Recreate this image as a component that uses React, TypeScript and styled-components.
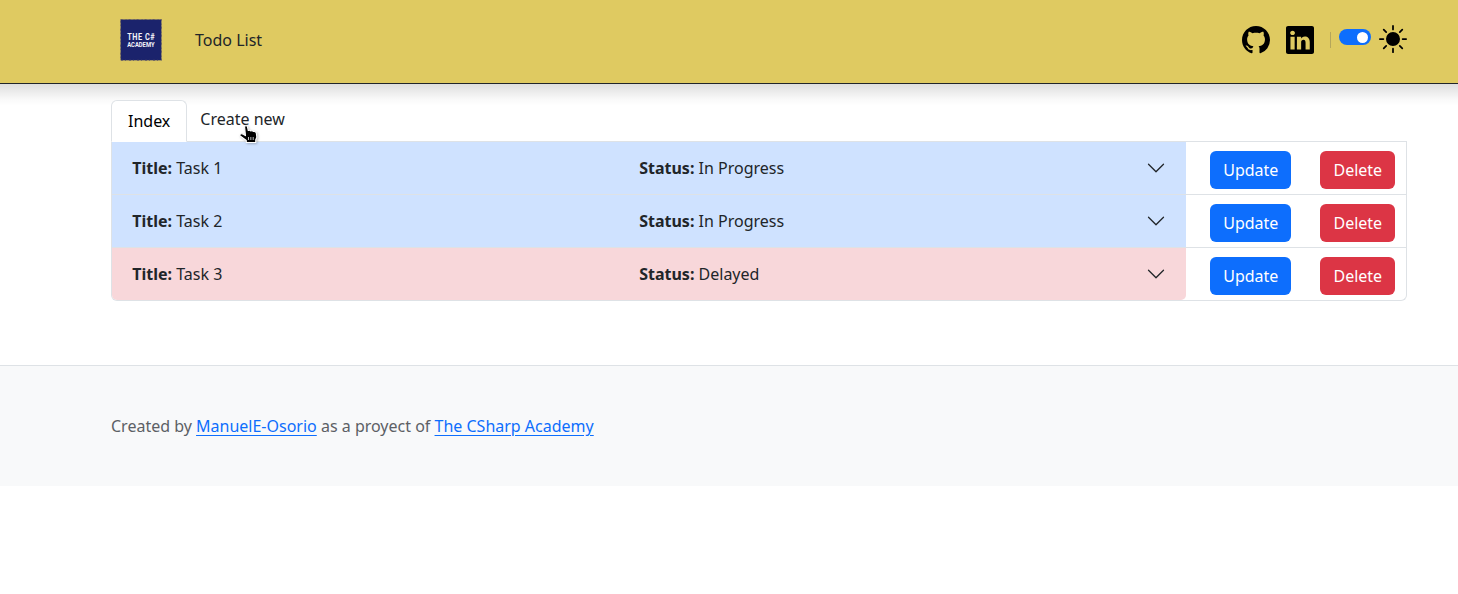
import React from "react";
import styled, { createGlobalStyle } from "styled-components";
import { BsGithub, BsLinkedin, BsSunFill, BsChevronDown } from "react-icons/bs";

const GlobalStyle = createGlobalStyle`
  *, *::before, *::after { box-sizing: border-box; }
  body {
    margin: 0;
    background: #fff;
    color: #212529;
    font: 400 16px/24px "Noto Sans", "Liberation Sans", sans-serif;
  }
`;

const Header = styled.header`
  position: relative;
  display: flex;
  align-items: flex-start;
  height: 84px;
  padding: 19px 51px 0 120px;
  background: #dfca61;
  border-bottom: 1px solid #212529;

  &::after {
    content: "";
    position: absolute;
    top: 84px;
    left: 0;
    right: 0;
    height: 22px;
    pointer-events: none;
    background: linear-gradient(
      rgba(0, 0, 0, 0.13),
      rgba(0, 0, 0, 0.075) 8px,
      rgba(0, 0, 0, 0.02) 16px,
      transparent
    );
  }
`;

const Brand = styled.a`
  display: flex;
  width: 42px;
  height: 42px;
`;

const HeaderLink = styled.a`
  margin: 9px auto 0 33px;
  color: #212529;
`;

const Tools = styled.div`
  display: flex;
  align-items: flex-start;
  color: #000;

  svg { display: block; }
`;

const ToolIcon = styled.a<{ $top: number; $gap?: number }>`
  margin-top: ${(p) => p.$top}px;
  margin-right: ${(p) => p.$gap ?? 0}px;
  color: #000;
`;

const Divider = styled.span`
  width: 1px;
  height: 16px;
  margin: 13px 8px 0 0;
  background: #b5a65b;
`;

const Switch = styled.span`
  display: flex;
  justify-content: flex-end;
  align-items: center;
  width: 32px;
  height: 16px;
  margin: 10px 8px 0 0;
  padding-right: 3px;
  border-radius: 8px;
  background: #0d6efd;
`;

const Knob = styled.span`
  width: 11px;
  height: 11px;
  border-radius: 50%;
  background: #fff;
`;

const Main = styled.main`
  width: 1296px;
  margin: 16px 0 0 111px;
`;

const Tabs = styled.nav`
  position: relative;
  display: flex;
  align-items: flex-start;
  height: 42px;
  border-bottom: 1px solid #dee2e6;
`;

const ActiveTab = styled.a`
  height: 42px;
  padding: 8px 16px;
  border: 1px solid #dee2e6;
  border-bottom-color: #fff;
  border-radius: 6px 6px 0 0;
  background: #fff;
  color: #000;
`;

const Tab = styled.a`
  position: relative;
  padding: 7px 13px;
  color: #212529;
`;

const Pointer = styled.svg`
  position: absolute;
  left: 52px;
  top: 25px;
  filter: drop-shadow(1px 1px 1px rgba(0, 0, 0, 0.25));
`;

const TaskList = styled.section`
  border: 1px solid #dee2e6;
  border-top: 0;
  border-radius: 0 0 6px 6px;
`;

const TaskRow = styled.div`
  display: flex;
  height: 53px;

  & + & { border-top: 1px solid #dee2e6; }
  &:first-child { height: 52px; }
`;

const Summary = styled.div<{ $tone: "info" | "danger" }>`
  display: flex;
  align-items: center;
  width: 1074px;
  padding: 0 20px 0 20.3px;
  background: ${(p) => (p.$tone === "danger" ? "#f8d7da" : "#cfe2ff")};

  ${TaskRow}:last-child & { border-radius: 0 0 5px 5px; }
`;

const Field = styled.div`
  width: 507px;
`;

const Chevron = styled(BsChevronDown)`
  margin-left: auto;
`;

const Actions = styled.div`
  display: flex;
  flex: 1;
  justify-content: flex-end;
  gap: 29px;
  padding: 9px 11px 0 0;
`;

const Button = styled.button<{ $color: string; $width: number }>`
  width: ${(p) => p.$width}px;
  height: 38px;
  padding: 0 0 0 0.6px;
  border: 0;
  border-radius: 6px;
  background: ${(p) => p.$color};
  color: #fff;
  font: inherit;
`;

const Footer = styled.footer`
  height: 121px;
  margin-top: 64px;
  padding: 48px 111px 0;
  border-top: 1px solid #dee2e6;
  background: #f8f9fa;
  color: #5c6065;
`;

const FooterLink = styled.a`
  color: #0d6efd;
  text-decoration: underline;
  text-underline-offset: 3px;
`;

const tasks = [
  { title: "Task 1", status: "In Progress", tone: "info" },
  { title: "Task 2", status: "In Progress", tone: "info" },
  { title: "Task 3", status: "Delayed", tone: "danger" },
] as const;

function Logo() {
  return (
    <svg width="42" height="42" viewBox="0 0 42 42">
      <rect x="0.6" y="0.5" width="40.8" height="40.8" fill="#1b236c" />
      <rect
        x="0.6" y="0.5" width="40.8" height="40.8"
        fill="none" stroke="#5d5365" strokeWidth="0.8" strokeDasharray="2 3 1 2"
      />
      <text
        transform="translate(7.2 0) scale(0.8 1)"
        fill="#f4f4fa" fontFamily="Roboto, sans-serif" fontWeight="700"
      >
        <tspan x="0" y="21" fontSize="9.2" textLength="34.2" lengthAdjust="spacing">THE C#</tspan>
        <tspan x="0" y="27.9" fontSize="7.3" textLength="34.2" lengthAdjust="spacing">ACADEMY</tspan>
      </text>
    </svg>
  );
}

function HandPointer() {
  return (
    <Pointer width="19" height="20" viewBox="0 0 17 20" preserveAspectRatio="none">
      <path
        d="M5 1.8C5 .4 7.4.4 7.6 1.8L8.3 5.6C9 5 10.2 5.2 10.5 6C11.3 5.5 12.5 5.8 12.8 6.6C14 6.2 15.4 6.8 15.5 8.2L16 12.2L15 14.8V17.4H6.5V15.5L1 10.8C.2 9.4 1.7 8 3.3 9.1L5.8 10.7Z"
        fill="#000" stroke="#fff" strokeWidth="1" strokeLinejoin="round"
      />
      <path d="M8.5 12V15M10.6 12V15M12.7 12V15" stroke="#fff" strokeWidth="0.7" />
    </Pointer>
  );
}

export default function App() {
  return (
    <>
      <GlobalStyle />
      <Header>
        <Brand><Logo /></Brand>
        <HeaderLink>Todo List</HeaderLink>
        <Tools>
          <ToolIcon $top={7} $gap={16}><BsGithub size={28} /></ToolIcon>
          <ToolIcon $top={7} $gap={16}><BsLinkedin size={28} /></ToolIcon>
          <Divider />
          <Switch><Knob /></Switch>
          <ToolIcon $top={6}><BsSunFill size={28} /></ToolIcon>
        </Tools>
      </Header>
      <Main>
        <Tabs>
          <ActiveTab>Index</ActiveTab>
          <Tab>Create new<HandPointer /></Tab>
        </Tabs>
        <TaskList>
          {tasks.map((task) => (
            <TaskRow key={task.title}>
              <Summary $tone={task.tone}>
                <Field><b>Title:</b> {task.title}</Field>
                <Field><b>Status:</b> {task.status}</Field>
                <Chevron size={20} />
              </Summary>
              <Actions>
                <Button $color="#0d6efd" $width={81}>Update</Button>
                <Button $color="#dc3545" $width={75}>Delete</Button>
              </Actions>
            </TaskRow>
          ))}
        </TaskList>
      </Main>
      <Footer>
        Created by <FooterLink>ManuelE-Osorio</FooterLink> as a proyect of{" "}
        <FooterLink>The CSharp Academy</FooterLink>
      </Footer>
    </>
  );
}
